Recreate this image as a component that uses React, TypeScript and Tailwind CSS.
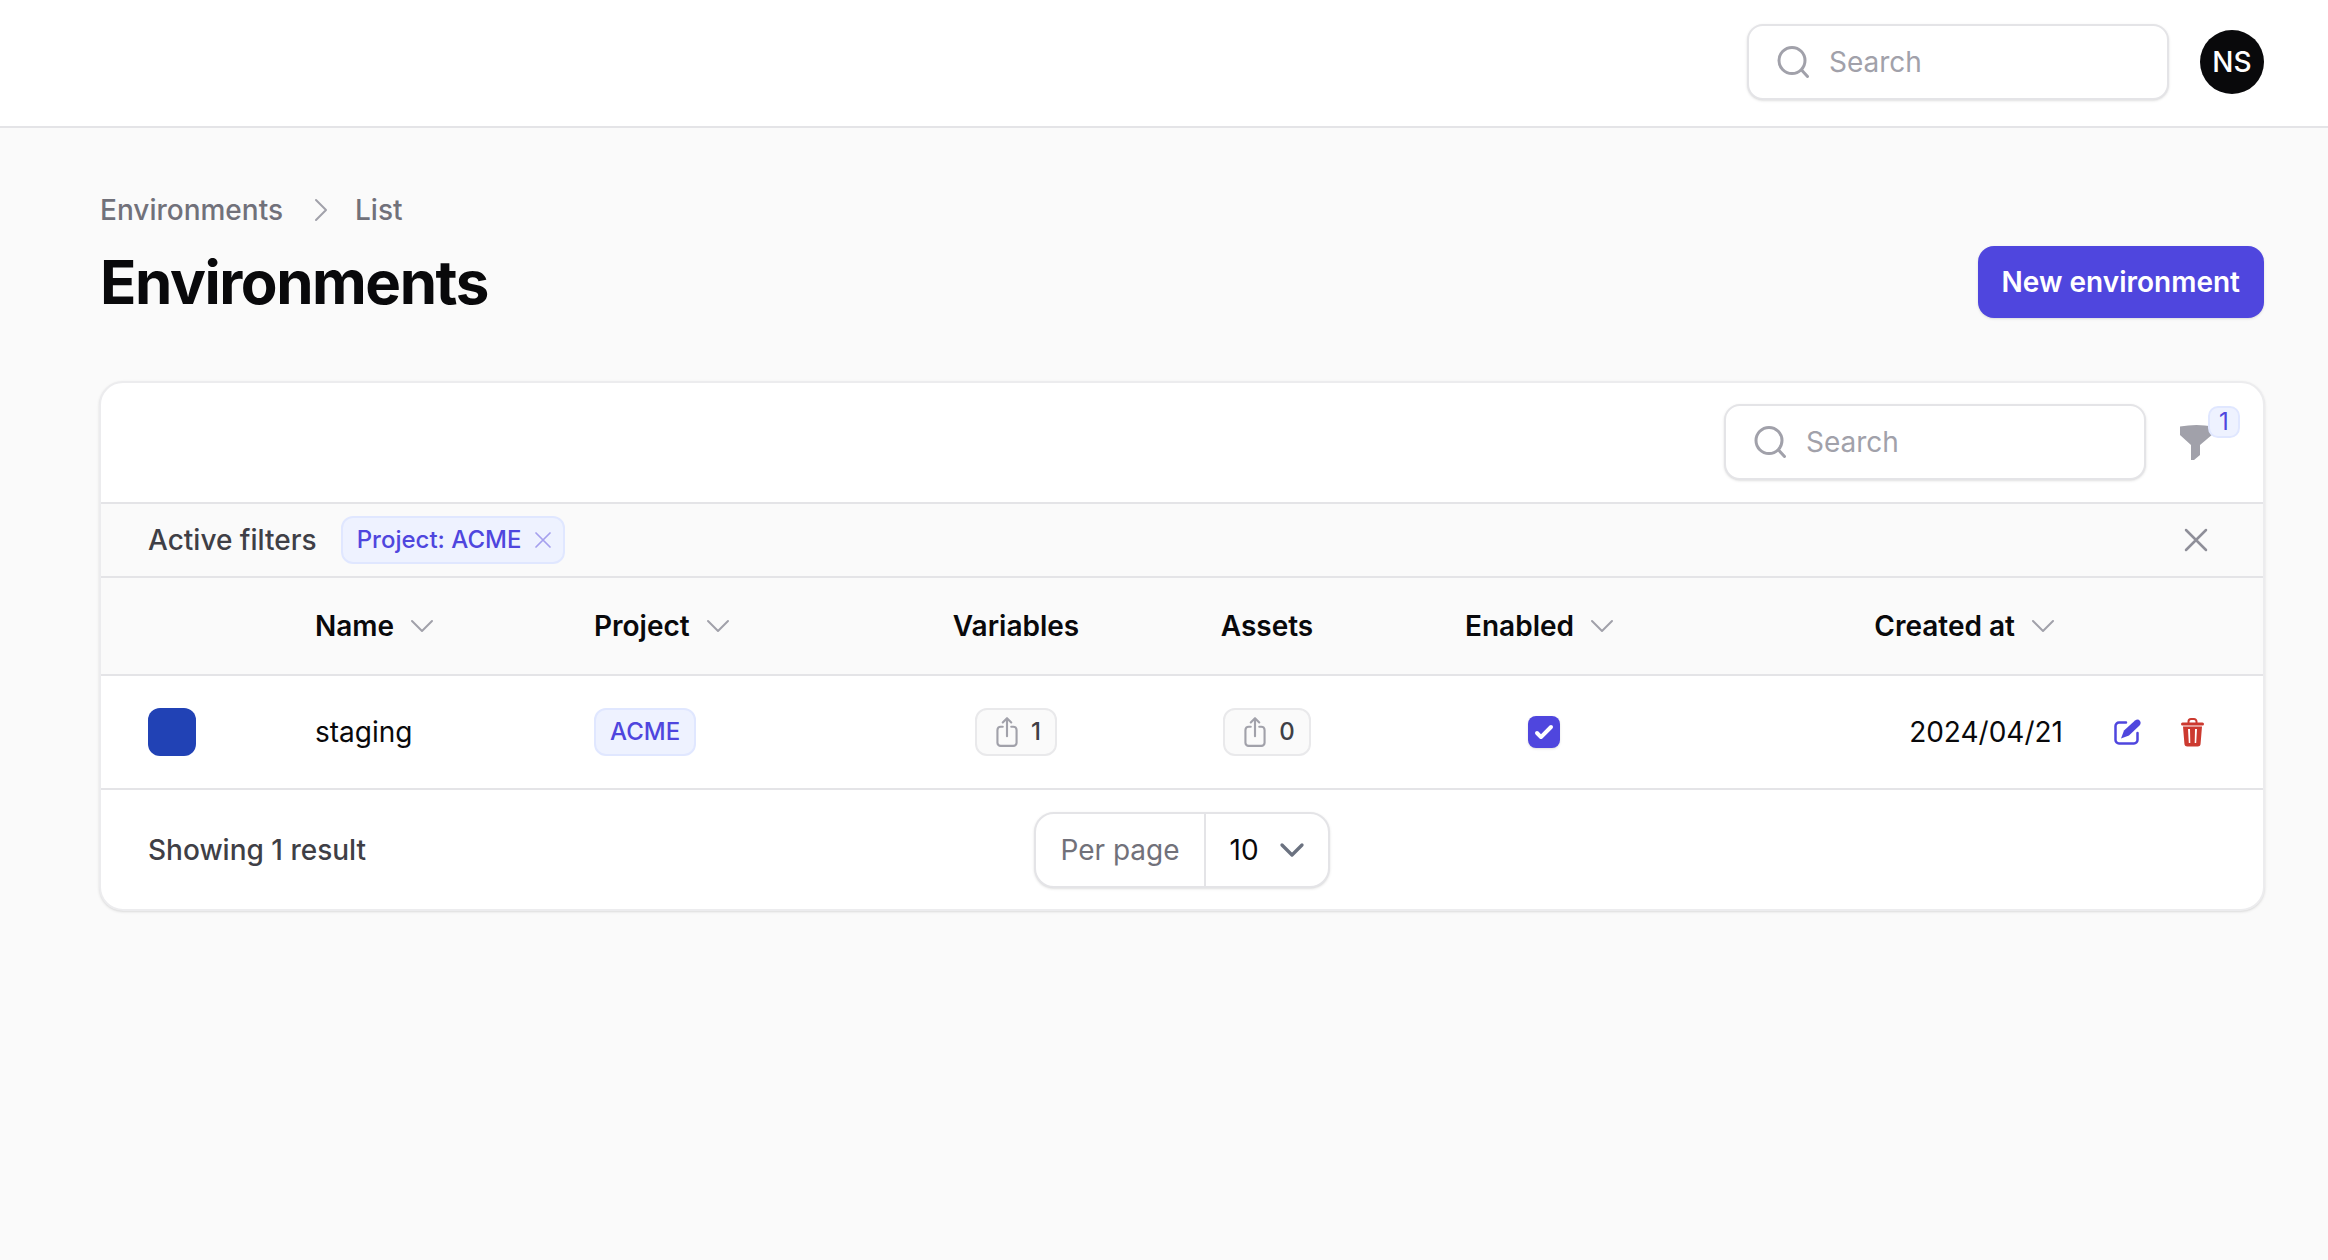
import { HiOutlineArrowUpOnSquare, HiOutlineChevronDown, HiOutlineChevronRight, HiOutlineXMark } from "react-icons/hi2";

const cols = "grid grid-cols-[214px_279px_326px_192px_310px_244px_421px_176px] items-center";

function SearchBox() {
  return (
    <div className="flex h-[76px] w-[422px] items-center rounded-[16px] border-2 border-[#e4e4e7] bg-white pl-[28px] shadow-sm">
      <svg viewBox="0 0 32 32" fill="none" stroke="currentColor" strokeWidth="3" strokeLinecap="round" className="size-[32px] text-[#a1a1aa]">
        <circle cx="15" cy="14.5" r="13" />
        <path d="M25 24.5 30.5 30.5" />
      </svg>
      <span className="ml-[20px] text-[28px] leading-[40px] text-[#a1a1aa]">Search</span>
    </div>
  );
}

function SortHead({ label }: { label: string }) {
  return (
    <div className="flex items-center gap-[12px] text-[28px] font-semibold leading-[40px] text-[#09090b]">
      <span>{label}</span>
      <HiOutlineChevronDown className="size-[32px] text-[#a1a1aa]" />
    </div>
  );
}

function CountBadge({ count }: { count: string }) {
  return (
    <div className="flex h-[48px] items-center gap-[7px] rounded-[12px] border-2 border-[#e9e9eb] bg-[#fafafa] pl-[13px] pr-[14px] text-[24px] font-medium text-[#3f3f46]">
      <HiOutlineArrowUpOnSquare className="size-[34px] text-[#a1a1aa]" />
      <span>{count}</span>
    </div>
  );
}

export default function App() {
  return (
    <div className="min-h-[1260px] bg-[#fafafa] font-['Inter',sans-serif]">
      <header className="flex h-[128px] items-center justify-end gap-[31px] border-b-2 border-[#e4e4e7] bg-white pb-[2px] pr-[64px]">
        <SearchBox />
        <div className="flex size-[64px] items-center justify-center rounded-full bg-[#09090b] text-[28px] font-medium text-white">NS</div>
      </header>

      <main className="pl-[100px] pr-[64px] pt-[62px]">
        <nav className="flex items-center text-[28px] font-medium leading-[40px] text-[#71717a]">
          <span>Environments</span>
          <HiOutlineChevronRight className="ml-[22px] mr-[18px] size-[32px] text-[#a1a1aa]" />
          <span>List</span>
        </nav>
        <div className="mt-[16px] flex h-[72px] items-center justify-between">
          <h1 className="text-[60px] font-bold leading-[72px] tracking-[-0.024em] text-[#09090b]">Environments</h1>
          <button className="flex h-[72px] items-center rounded-[16px] bg-[#4f46de] px-[24px] text-[28px] font-semibold text-white shadow-sm">New environment</button>
        </div>

        <section className="-mx-[1px] mt-[63px] overflow-hidden rounded-[24px] border-2 border-[#ececee] bg-white shadow-sm">
          <div className="flex h-[121px] items-center justify-end gap-[30px] border-b-2 border-[#e4e4e7] pb-[1px] pr-[47px]">
            <SearchBox />
            <div className="relative flex size-[40px] items-center justify-center">
              <svg viewBox="0 0 33 36" className="absolute left-[4px] top-[2px] h-[36px] w-[33px] fill-[#a1a1aa]">
                <path d="M0 2.5Q16.5-.5 33 2.5V10L20 21V31L14 36H11V21L0 11Z" />
              </svg>
              <span className="absolute -top-[16px] left-[32px] flex size-[32px] items-center justify-center rounded-[10px] border-2 border-[#e0e7ff] bg-[#eef2ff] text-[24px] text-[#4f46de]">1</span>
            </div>
          </div>

          <div className="flex h-[74px] items-center border-b-2 border-[#e4e4e7] bg-[#fafafa] px-[47px]">
            <span className="text-[28px] font-medium leading-[40px] text-[#3f3f46]">Active filters</span>
            <div className="ml-[24px] flex h-[48px] items-center gap-[8px] rounded-[12px] border-2 border-[#e0e7ff] bg-[#eef2ff] pl-[14px] pr-[6px] text-[24px] font-medium text-[#4f46de]">
              <span>Project: ACME</span>
              <HiOutlineXMark className="size-[28px] text-[#a5a0ee]" />
            </div>
            <HiOutlineXMark className="ml-auto size-[40px] text-[#8f8f99]" />
          </div>

          <div className={`${cols} h-[98px] border-b-2 border-[#e4e4e7] bg-[#fafafa]`}>
            <div />
            <SortHead label="Name" />
            <SortHead label="Project" />
            <div className="text-center text-[28px] font-semibold text-[#09090b]">Variables</div>
            <div className="text-center text-[28px] font-semibold text-[#09090b]">Assets</div>
            <div className="flex justify-center pr-[5px]"><SortHead label="Enabled" /></div>
            <div className="flex justify-end pr-[28px]"><SortHead label="Created at" /></div>
            <div />
          </div>

          <div className={`${cols} h-[114px] border-b-2 border-[#e4e4e7]`}>
            <div className="pl-[47px]"><div className="size-[48px] rounded-[12px] bg-[#2142b5]" /></div>
            <div className="text-[28px] leading-[40px] text-[#09090b]">staging</div>
            <div className="flex">
              <div className="flex h-[48px] items-center rounded-[12px] border-2 border-[#e0e7ff] bg-[#eef2ff] px-[14px] text-[24px] font-medium text-[#4f46de]">ACME</div>
            </div>
            <div className="flex justify-center"><CountBadge count="1" /></div>
            <div className="flex justify-center"><CountBadge count="0" /></div>
            <div className="flex justify-center">
              <div className="flex size-[32px] items-center justify-center rounded-[8px] bg-[#4f46de] shadow-sm">
                <svg viewBox="0 0 16 16" className="size-[34px] fill-white"><path d="M12.207 4.793a1 1 0 010 1.414l-5 5a1 1 0 01-1.414 0l-2-2a1 1 0 011.414-1.414L6.5 9.086l4.293-4.293a1 1 0 011.414 0z" /></svg>
              </div>
            </div>
            <div className="pr-[24px] text-right text-[28px] leading-[40px] text-[#09090b]">2024/04/21</div>
            <div className="flex items-center gap-[39px] pl-[27px]">
              <svg viewBox="0 0 28 26" className="h-[26px] w-[28px] text-[#4f46de]">
                <path d="M12 3.5H5A3.5 3.5 0 0 0 1.5 7V21A3.5 3.5 0 0 0 5 24.5H20A3.5 3.5 0 0 0 23.500 21V14" fill="none" stroke="currentColor" strokeWidth="2.5" strokeLinecap="round" />
                <path d="M7 19.500 10 11.500 21 1.500Q24-.5 26 2 27.500 4.500 25.500 6.500L15 16.500Z" fill="currentColor" />
              </svg>
              <svg viewBox="0 0 23 29" className="h-[29px] w-[23px] text-[#cc3a30]">
                <path d="M7.500 5V3.500A2.500 2.500 0 0 1 10 1H13A2.500 2.500 0 0 1 15.500 3.500V5" fill="none" stroke="currentColor" strokeWidth="2" />
                <rect x="0" y="4.500" width="23" height="3" rx="1.500" fill="currentColor" />
                <path fillRule="evenodd" fill="currentColor" d="M2 8.500H21L19.600 25.500A3 3 0 0 1 16.600 28.500H6.400A3 3 0 0 1 3.400 25.500ZM7 11 7.800 25H9.300L9 11ZM14 11 13.700 25H15.200L16 11Z" />
              </svg>
            </div>
          </div>

          <div className="grid h-[119px] grid-cols-3 items-center px-[47px]">
            <span className="text-[28px] font-medium leading-[40px] text-[#3f3f46]">Showing 1 result</span>
            <div className="flex justify-center">
              <div className="flex h-[76px] items-center rounded-[20px] border-2 border-[#e4e4e7] bg-white shadow-sm">
                <span className="flex h-full items-center border-r-2 border-[#e4e4e7] px-[24px] text-[28px] text-[#71717a]">Per page</span>
                <span className="flex items-center gap-[17px] pl-[24px] pr-[20px] text-[28px] text-[#09090b]">
                  10
                  <HiOutlineChevronDown className="size-[32px] stroke-[2.5] text-[#6b7280]" />
                </span>
              </div>
            </div>
            <div />
          </div>
        </section>
      </main>
    </div>
  );
}
